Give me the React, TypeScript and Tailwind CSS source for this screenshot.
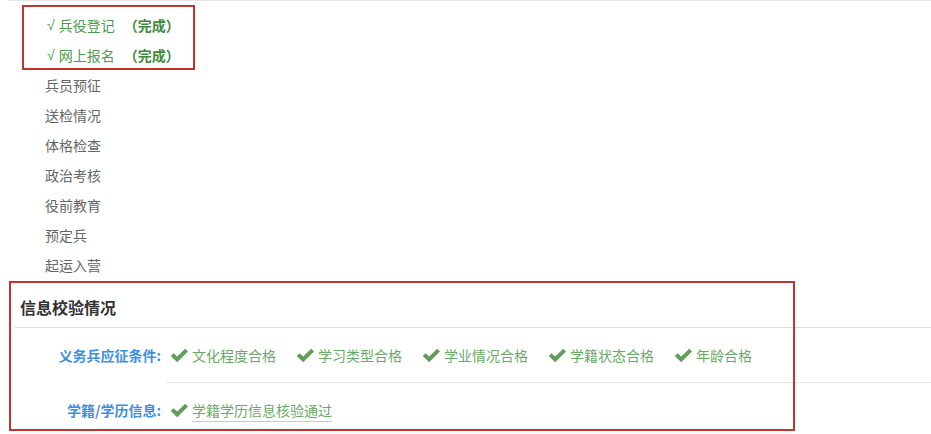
const steps = ["兵员预征", "送检情况", "体格检查", "政治考核", "役前教育", "预定兵", "起运入营"];
const done = ["兵役登记", "网上报名"];
const conditions = ["文化程度合格", "学习类型合格", "学业情况合格", "学籍状态合格", "年龄合格"];

function Check() {
  return (
    <svg width="19" height="15" viewBox="0 0 19 15" className="shrink-0">
      <path d="M0.8 8 L3.6 5.2 L7.2 8.6 L15.2 0.8 L18 3.6 L7.2 14.2 Z" fill="#5f9e5b" />
    </svg>
  );
}

function Item({ text, underline }: { text: string; underline?: boolean }) {
  return (
    <div className="flex items-center gap-[3px]">
      <Check />
      <span className={underline ? "underline decoration-[#b9d4b7] underline-offset-[5px]" : ""}>{text}</span>
    </div>
  );
}

export default function App() {
  return (
    <div
      className="relative h-[434px] w-[931px] overflow-hidden bg-white text-[14px]"
      style={{ fontFamily: '"Noto Sans CJK SC", "Noto Sans", sans-serif' }}
    >
      {/* top rule */}
      <div className="ml-[8px] h-px bg-[#e6e6e6]" />

      {/* progress list */}
      <ul className="pt-[9px] pl-[45px]">
        {done.map((d) => (
          <li key={d} className="flex h-[30px] items-center text-[#4e9a4c]">
            <span className="ml-[2px] font-['Liberation_Sans',sans-serif]">√</span>
            <span className="ml-[4px]">{d}</span>
            <span className="ml-[9px] font-bold text-[#3f8a3d]">（完成）</span>
          </li>
        ))}
        {steps.map((s) => (
          <li key={s} className="flex h-[30px] items-center text-[#666]">
            {s}
          </li>
        ))}
      </ul>

      {/* info check section */}
      <section>
        <div className="ml-[15px] flex h-[48px] items-end border-b border-[#dcdcdc] pb-[8px] pl-[5px]">
          <h2 className="text-[16px] font-bold leading-[24px] text-[#333]">信息校验情况</h2>
        </div>

        <div className="flex h-[55px]">
          <div className="flex w-[161px] shrink-0 items-center justify-end font-bold text-[#3e8fdd]">义务兵应征条件:</div>
          <div className="ml-[6px] flex flex-1 items-center gap-[20px] border-b border-dotted border-[#d8d8d8] pl-[3px] text-[#6aa867]">
            {conditions.map((c) => (
              <Item key={c} text={c} />
            ))}
          </div>
        </div>

        <div className="flex h-[55px]">
          <div className="flex w-[161px] shrink-0 items-center justify-end font-bold text-[#3e8fdd]">学籍/学历信息:</div>
          <div className="ml-[6px] flex flex-1 items-center pl-[3px] text-[#6aa867]">
            <Item text="学籍学历信息核验通过" underline />
          </div>
        </div>
      </section>

      {/* annotation boxes */}
      <div className="pointer-events-none absolute left-[22px] top-[5px] h-[65px] w-[173px] border-2 border-[#c2342d]" />
      <div className="pointer-events-none absolute left-[9px] top-[281px] h-[150px] w-[786px] border-2 border-[#c2342d]" />
    </div>
  );
}
